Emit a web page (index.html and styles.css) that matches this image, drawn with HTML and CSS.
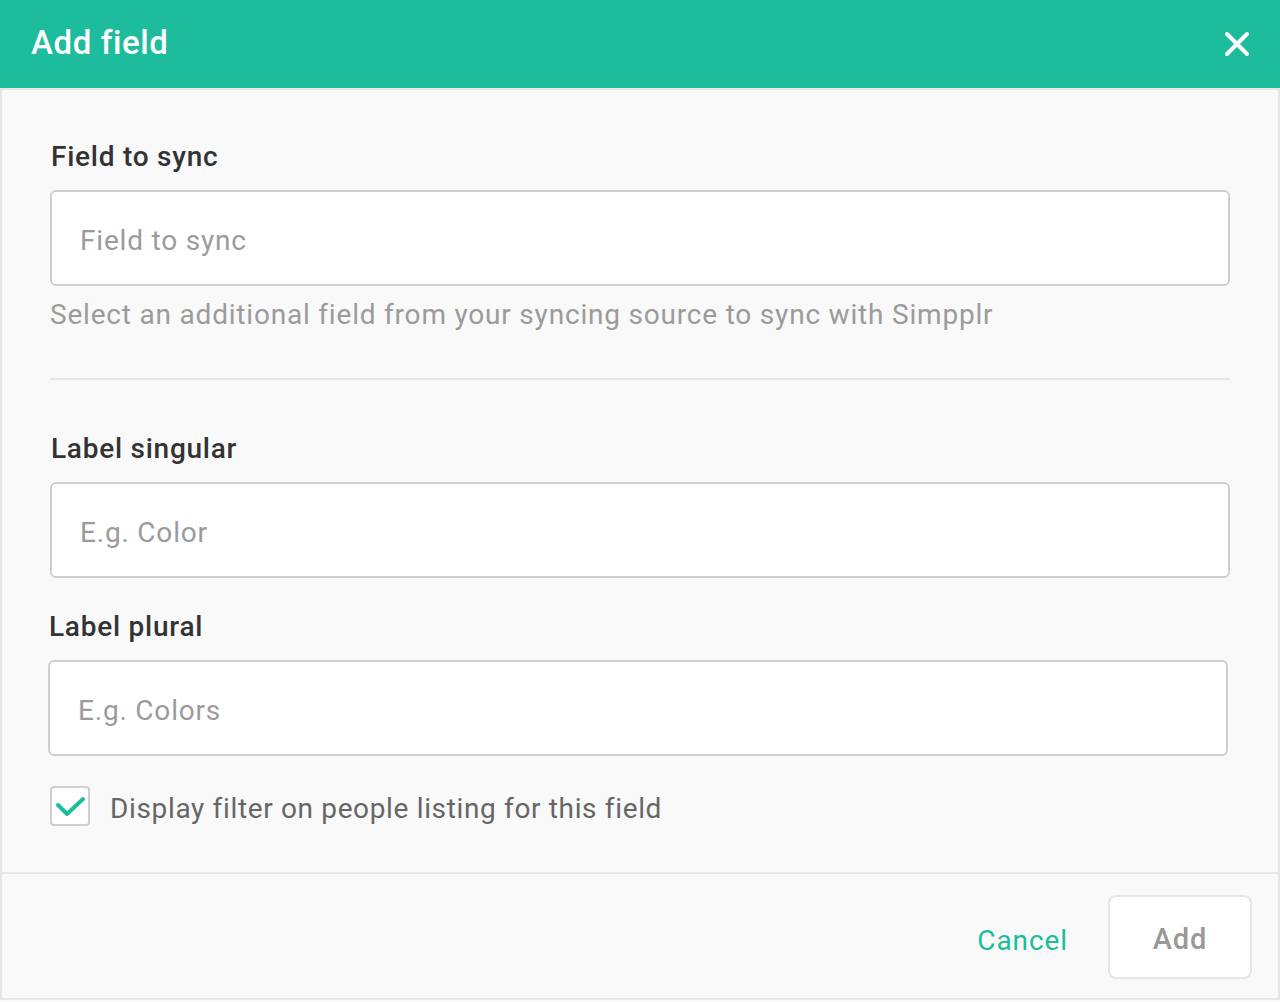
FILE: index.html
```html
<!DOCTYPE html>
<html lang="en">
<head>
<meta charset="utf-8">
<title>Add field</title>
<link rel="stylesheet" href="styles.css">
</head>
<body>
<div class="modal">
  <header class="modal-header">
    <h1 class="modal-title">Add field</h1>
    <button class="close-btn" aria-label="Close">
      <svg width="26" height="26" viewBox="0 0 26 26"><path d="M3 3 L23 23 M23 3 L3 23" stroke="#fff" stroke-width="4" stroke-linecap="round" fill="none"/></svg>
    </button>
  </header>
  <div class="modal-body">
    <label class="field-label">Field to sync</label>
    <div class="input"><span class="placeholder">Field to sync</span></div>
    <p class="help">Select an additional field from your syncing source to sync with Simpplr</p>
    <hr class="divider">
    <label class="field-label label-singular">Label singular</label>
    <div class="input"><span class="placeholder">E.g. Color</span></div>
    <label class="field-label label-plural">Label plural</label>
    <div class="input input-shift"><span class="placeholder">E.g. Colors</span></div>
    <div class="check-row">
      <span class="checkbox">
        <svg width="36" height="36" viewBox="0 0 36 36"><path d="M6 17 L15 26 L31 11" stroke="#1dbc9c" stroke-width="4" stroke-linecap="round" stroke-linejoin="round" fill="none"/></svg>
      </span>
      <span class="check-text">Display filter on people listing for this field</span>
    </div>
  </div>
  <footer class="modal-footer">
    <button class="btn-cancel">Cancel</button>
    <button class="btn-add">Add</button>
  </footer>
</div>
</body>
</html>
```
FILE: styles.css
```css
* { box-sizing: border-box; }
html, body { margin: 0; padding: 0; }
body {
  width: 1280px;
  height: 1002px;
  font-family: "Roboto", "Open Sans", sans-serif;
  font-variant-ligatures: none;
  background: #f9f9f9;
  overflow: hidden;
}
.modal {
  width: 1280px;
  display: flex;
  flex-direction: column;
}
.modal-header {
  height: 88px;
  background: #1dbc9c;
  display: flex;
  align-items: center;
  justify-content: space-between;
  padding: 0 31px 0 31px;
}
.modal-title {
  margin: 0;
  color: #fff;
  font-size: 33px;
  font-weight: 500;
  line-height: 40px;
  letter-spacing: 0.6px;
  padding-bottom: 2px;
}
.close-btn {
  background: none;
  border: 0;
  padding: 0;
  width: 26px;
  height: 26px;
  margin-right: -1px;
  display: flex;
  cursor: pointer;
}
.modal-body {
  border: 2px solid #e6e6e6;
  border-bottom: 0;
  padding: 50px 48px 46px 48px;
  display: flex;
  flex-direction: column;
}
.field-label {
  display: block;
  font-size: 28px;
  font-weight: 500;
  color: #333;
  line-height: 32px;
  margin-left: 1px;
  letter-spacing: 0.75px;
  padding-top: 1px;
  margin-bottom: -1px;
}
.input {
  margin-top: 18px;
  height: 96px;
  background: #fff;
  border: 2px solid #cfcfcf;
  border-radius: 6px;
  display: flex;
  align-items: center;
  padding: 6px 28px 0 28px;
}
.input-shift { margin-left: -2px; margin-right: 2px; }
.placeholder {
  font-size: 28px;
  color: #9b9b9b;
  line-height: 32px;
  letter-spacing: 0.8px;
}
.help {
  margin: 13px 0 0 0;
  font-size: 28px;
  color: #9b9b9b;
  line-height: 32px;
  letter-spacing: 0.8px;
}
.divider {
  margin: 47px 0 0 0;
  border: 0;
  height: 2px;
  background: #e6e6e6;
}
.label-singular { margin-top: 52px; }
.label-plural { margin-top: 32px; margin-left: -1px; }
.check-row {
  margin-top: 30px;
  display: flex;
  align-items: center;
  gap: 20px;
}
.checkbox {
  width: 40px;
  height: 40px;
  border: 2px solid #cfcfcf;
  border-radius: 4px;
  background: #fff;
  display: flex;
  align-items: center;
  justify-content: center;
}
.check-text {
  font-size: 28px;
  color: #666;
  line-height: 32px;
  letter-spacing: 0.65px;
  padding-top: 6px;
}
.modal-footer {
  height: 128px;
  border: 2px solid #e6e6e6;
  display: flex;
  align-items: center;
  justify-content: flex-end;
  padding: 0 26px 0 0;
  gap: 40px;
}
.btn-cancel {
  background: none;
  border: 0;
  padding: 0;
  font-family: inherit;
  font-size: 28px;
  color: #1dbc9c;
  line-height: 32px;
  letter-spacing: 0.9px;
  margin-top: 10px;
}
.btn-add {
  width: 144px;
  height: 84px;
  background: #fff;
  border: 2px solid #e6e6e6;
  border-radius: 8px;
  font-family: inherit;
  font-size: 29px;
  font-weight: 500;
  letter-spacing: 0.9px;
  color: #999;
  margin-top: 2px;
  padding: 4px 0 0 0;
}
```
